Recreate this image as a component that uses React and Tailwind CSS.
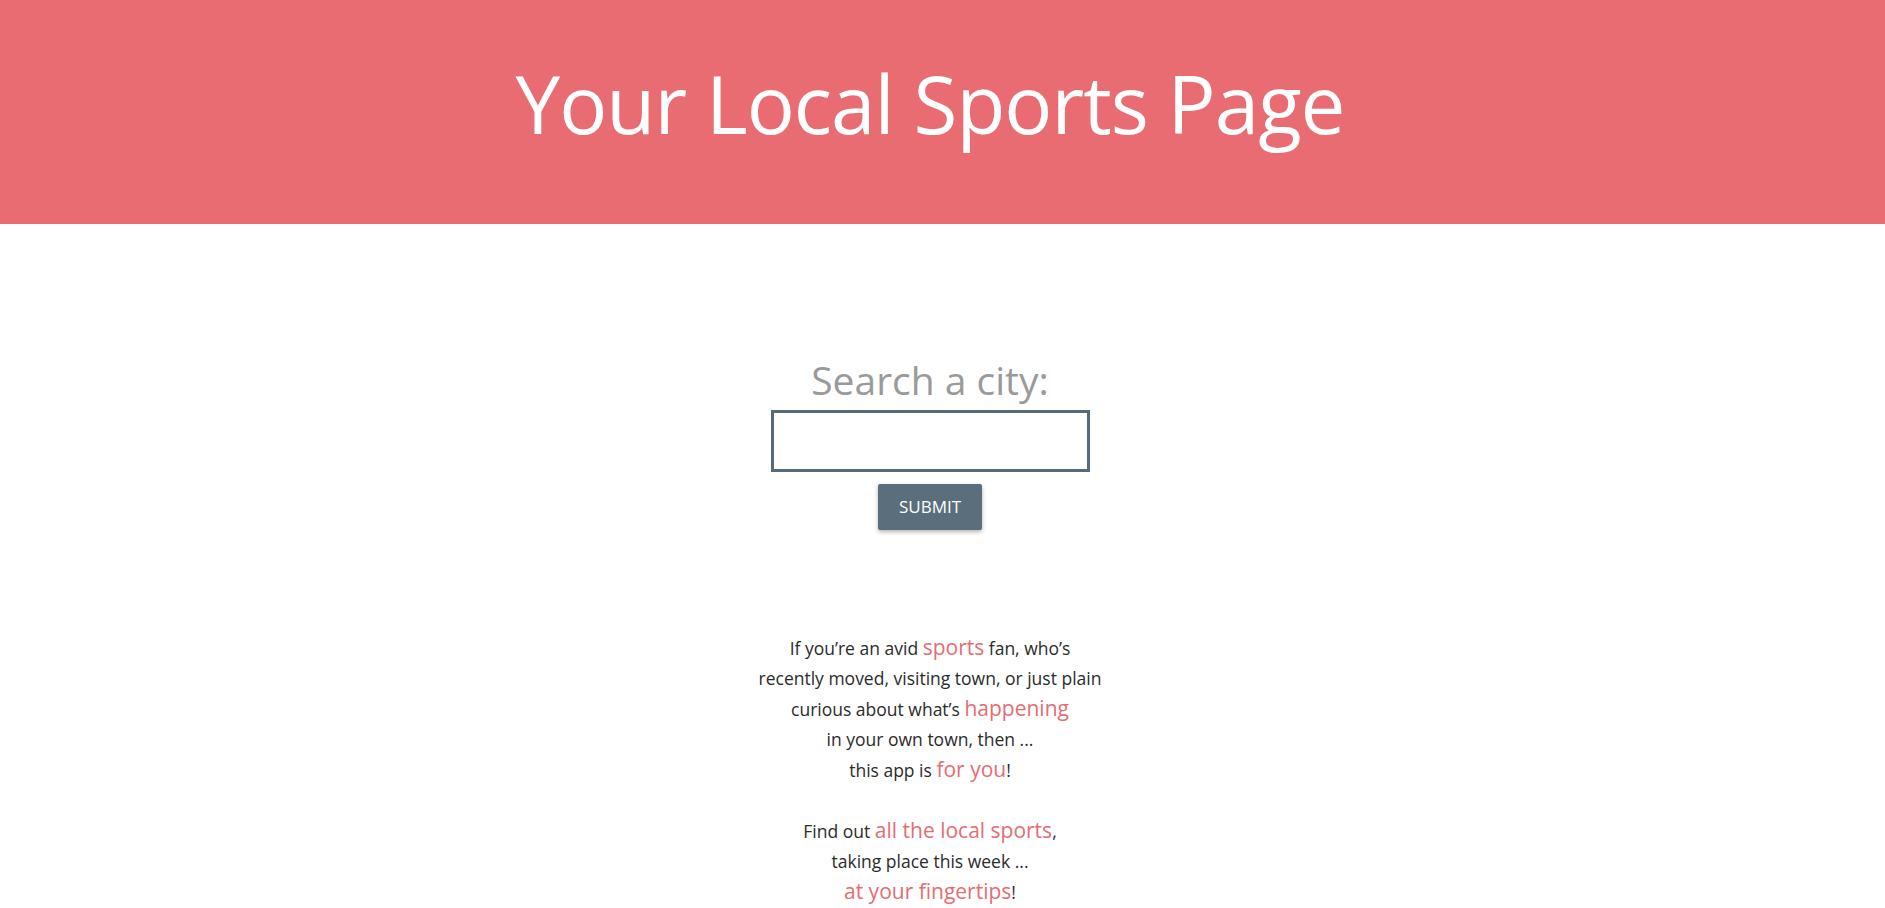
import { useState } from "react";

const Hl = ({ children }) => (
  <span className="text-[21px] text-[#e46d72]">{children}</span>
);

const App = () => {
  const [city, setCity] = useState("");

  return (
    <div className="min-h-screen bg-white font-['Open_Sans',sans-serif]">
      <header className="flex h-[224px] items-center justify-center bg-[#e86c71] pb-[18px] pr-[25px]">
        <h1 className="text-[80px] font-normal leading-none tracking-[-1px] text-white">
          Your Local Sports Page
        </h1>
      </header>

      <main className="flex flex-col items-center pr-[25px]">
        <form
          className="mt-[128px] flex flex-col items-center"
          onSubmit={(e) => e.preventDefault()}
        >
          <label className="text-[39px] leading-[56px] text-[#9a9a9a]">
            Search a city:
          </label>
          <input
            value={city}
            onChange={(e) => setCity(e.target.value)}
            className="mt-[2px] h-[62px] w-[319px] border-[3px] border-[#566a77] bg-white px-3 text-xl outline-none"
          />
          <button
            type="submit"
            className="mt-[12px] h-[46px] w-[104px] rounded-[2px] bg-[#5a6e7b] text-[17px] uppercase text-white shadow-[0_2px_4px_rgba(0,0,0,0.3)]"
          >
            Submit
          </button>
        </form>

        <div className="mt-[102px] text-center text-[17.5px] leading-[30px] text-[#2b2b2b]">
          <p>
            If you’re an avid <Hl>sports</Hl> fan, who’s
            <br />
            recently moved, visiting town, or just plain
            <br />
            curious about what’s <Hl>happening</Hl>
            <br />
            in your own town, then ...
            <br />
            this app is <Hl>for you</Hl>!
          </p>
          <p className="mt-[30px]">
            Find out <Hl>all the local sports</Hl>,
            <br />
            taking place this week ...
            <br />
            <Hl>at your fingertips</Hl>!
          </p>
        </div>
      </main>
    </div>
  );
};

export default App;
